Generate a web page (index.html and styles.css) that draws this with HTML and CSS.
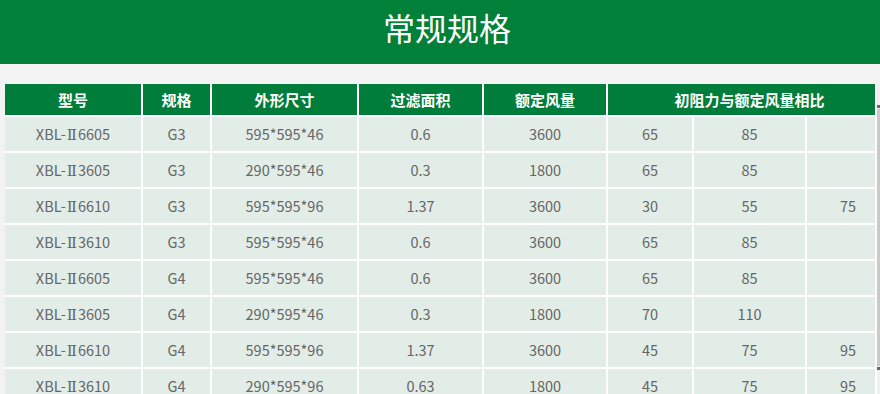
FILE: index.html
```html
<!DOCTYPE html>
<html lang="zh-CN">
<head>
<meta charset="utf-8">
<title>常规规格</title>
<link rel="stylesheet" href="styles.css">
</head>
<body>
<header class="banner"><h1 class="banner-title">常规规格</h1></header>
<main class="content">
  <div class="table-wrap">
    <table class="spec">
      <colgroup>
        <col class="c1"><col class="c2"><col class="c3"><col class="c4"><col class="c5"><col class="c6"><col class="c7"><col class="c8">
      </colgroup>
      <thead>
        <tr>
          <th>型号</th><th>规格</th><th>外形尺寸</th><th>过滤面积</th><th>额定风量</th><th colspan="3" class="ratio">初阻力与额定风量相比</th>
        </tr>
      </thead>
      <tbody>
        <tr><td>XBL-<span class="roman">Ⅱ</span>6605</td><td>G3</td><td>595*595*46</td><td>0.6</td><td>3600</td><td>65</td><td>85</td><td class="last"></td></tr>
        <tr><td>XBL-<span class="roman">Ⅱ</span>3605</td><td>G3</td><td>290*595*46</td><td>0.3</td><td>1800</td><td>65</td><td>85</td><td class="last"></td></tr>
        <tr><td>XBL-<span class="roman">Ⅱ</span>6610</td><td>G3</td><td>595*595*96</td><td>1.37</td><td>3600</td><td>30</td><td>55</td><td class="last">75</td></tr>
        <tr><td>XBL-<span class="roman">Ⅱ</span>3610</td><td>G3</td><td>595*595*46</td><td>0.6</td><td>3600</td><td>65</td><td>85</td><td class="last"></td></tr>
        <tr><td>XBL-<span class="roman">Ⅱ</span>6605</td><td>G4</td><td>595*595*46</td><td>0.6</td><td>3600</td><td>65</td><td>85</td><td class="last"></td></tr>
        <tr><td>XBL-<span class="roman">Ⅱ</span>3605</td><td>G4</td><td>290*595*46</td><td>0.3</td><td>1800</td><td>70</td><td>110</td><td class="last"></td></tr>
        <tr><td>XBL-<span class="roman">Ⅱ</span>6610</td><td>G4</td><td>595*595*96</td><td>1.37</td><td>3600</td><td>45</td><td>75</td><td class="last">95</td></tr>
        <tr><td>XBL-<span class="roman">Ⅱ</span>3610</td><td>G4</td><td>290*595*96</td><td>0.63</td><td>1800</td><td>45</td><td>75</td><td class="last">95</td></tr>
      </tbody>
    </table>
    <div class="scrollbar">
      <span class="sb-arrow sb-up"></span>
      <span class="sb-thumb"></span>
      <span class="sb-arrow"></span>
    </div>
  </div>
</main>
</body>
</html>
```

FILE: styles.css
```css
html, body {
  margin: 0;
  padding: 0;
  overflow: hidden;
}
body {
  background: #f3f3f3;
  font-family: "Noto Sans CJK SC", "Noto Sans", sans-serif;
  width: 880px;
  height: 394px;
}
.banner {
  background: #008039;
  height: 64px;
}
.banner-title {
  margin: 0;
  padding-left: 14px;
  text-align: center;
  color: #fff;
  font-size: 32px;
  font-weight: 400;
  line-height: 54px;
}
.content {
  padding: 20px 0 0 5px;
}
.table-wrap {
  display: flex;
  align-items: flex-start;
}
.spec {
  border-collapse: separate;
  border-spacing: 0;
  table-layout: fixed;
  width: 872px;
  flex: none;
}
.c1 { width: 138px; }
.c2 { width: 69px; }
.c3 { width: 147px; }
.c4 { width: 125px; }
.c5 { width: 124px; }
.c6 { width: 86px; }
.c7 { width: 113px; }
.c8 { width: 70px; }
.spec th,
.spec td {
  padding: 0;
  border-right: 2px solid #fff;
  border-bottom: 2px solid #fff;
  text-align: center;
  white-space: nowrap;
}
.spec th {
  background: #007d3a;
  color: #fff;
  font-size: 15px;
  font-weight: 700;
  line-height: 31px;
  height: 31px;
}
.spec th.ratio {
  padding-left: 16px;
}
.spec td {
  background: #e2ede8;
  color: #666;
  font-size: 14.5px;
  line-height: 34px;
  height: 34px;
}
.spec td.last {
  padding-left: 14px;
}
.roman {
  font-family: "DejaVu Serif", serif;
  font-size: 15px;
  line-height: 1;
  padding: 0 1px;
}
.scrollbar {
  flex: none;
  width: 4px;
  height: 310px;
  background: #f0f0f0;
  display: flex;
  flex-direction: column;
}
.sb-arrow {
  display: block;
  height: 3px;
  background: #666;
}
.sb-up {
  margin-top: 21px;
}
.sb-thumb {
  display: block;
  height: 257px;
  margin: 1px 0;
  background: #c9c9c9;
}
```
